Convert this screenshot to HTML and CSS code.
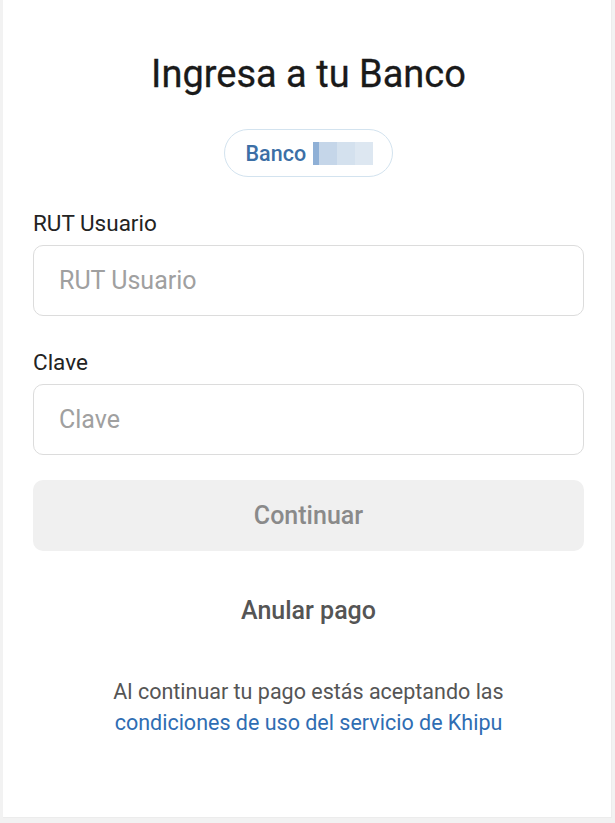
FILE: index.html
```html
<!DOCTYPE html>
<html lang="es">
<head>
<meta charset="utf-8">
<link rel="stylesheet" href="styles.css">
</head>
<body>
<main class="card">
  <h1 class="title">Ingresa a tu Banco</h1>
  <div class="pill-row">
    <span class="pill">Banco <span class="blur"></span></span>
  </div>
  <form class="form">
    <label class="field">
      <span class="label">RUT Usuario</span>
      <span class="input"><span class="ph">RUT Usuario</span></span>
    </label>
    <label class="field">
      <span class="label">Clave</span>
      <span class="input"><span class="ph">Clave</span></span>
    </label>
    <div class="btn">Continuar</div>
    <div class="cancel">Anular pago</div>
  </form>
  <p class="terms">Al continuar tu pago estás aceptando las<br><a class="link">condiciones de uso del servicio de Khipu</a></p>
</main>
</body>
</html>
```
FILE: styles.css
```css
html, body { margin: 0; padding: 0; }
body {
  background: #f2f2f2;
  width: 615px;
  height: 823px;
  font-family: Roboto, "Liberation Sans", sans-serif;
  color: #222;
}
.card {
  box-sizing: border-box;
  margin-left: 3px;
  width: 609px;
  height: 818px;
  background: #fff;
  border-right: 1px solid #ececec;
  border-bottom: 1px solid #ececec;
  padding: 50px 27px 0 30px;
}
.title {
  margin: 0;
  text-align: center;
  font-size: 38px;
  font-weight: 400;
  line-height: 48px;
  color: #1a1a1a;
  -webkit-text-stroke: 0.3px #1a1a1a;
}
.pill-row { display: flex; justify-content: center; margin-top: 31px; }
.pill {
  display: flex;
  align-items: center;
  height: 48px;
  box-sizing: border-box;
  padding: 0 19px 0 21px;
  border: 1.5px solid #d3e3ef;
  border-radius: 24px;
  color: #3c6fa6;
  font-size: 21.5px;
  font-weight: 500;
  white-space: pre;
}
.blur {
  display: inline-block;
  width: 60px;
  height: 23px;
  margin-left: 2px;
  background: linear-gradient(90deg, #8fb0d6 0 10%, #c5d6e9 10% 40%, #d4e1ee 40% 70%, #dde7f1 70%);
}
.form { display: flex; flex-direction: column; margin-top: 32px; }
.field { display: flex; flex-direction: column; margin-bottom: 32px; }
.field + .field { margin-bottom: 25px; }
.label { font-size: 22.5px; line-height: 28px; font-weight: 400; color: #232323; margin-bottom: 8px; }
.input {
  box-sizing: border-box;
  height: 71px;
  border: 1.5px solid #dcdcdc;
  border-radius: 10px;
  display: flex;
  align-items: center;
  padding-left: 25px;
}
.ph { font-size: 25px; color: #a0a0a0; }
.btn {
  height: 71px;
  border-radius: 10px;
  background: #f0f0f0;
  display: flex;
  align-items: center;
  justify-content: center;
  font-size: 25px;
  font-weight: 500;
  color: #8a8a8a;
}
.cancel {
  margin-top: 42px;
  text-align: center;
  font-size: 25px;
  font-weight: 500;
  color: #555;
  line-height: 36px;
}
.terms {
  margin: 47px 0 0 0;
  text-align: center;
  font-size: 21.5px;
  line-height: 31px;
  color: #555;
}
.link { color: #2f6db3; }
```
